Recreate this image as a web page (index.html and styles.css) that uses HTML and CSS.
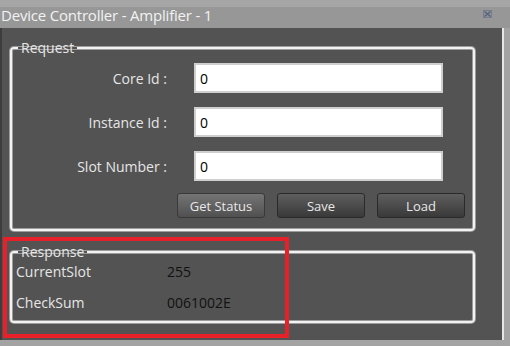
FILE: index.html
```html
<!DOCTYPE html>
<html lang="en">
<head>
  <meta charset="UTF-8"/>
  <title>Device Controller - Amplifier - 1</title>
  <link rel="stylesheet" href="styles.css">
</head>
<body>
  <div class="window">
    <div class="titlebar">
      <span class="title">Device Controller - Amplifier - 1</span>
      <svg class="pin" width="9" height="8" viewBox="0 0 9 8">
        <rect x="0.5" y="0.5" width="8" height="7" fill="#8a90a0" stroke="#767d8f" stroke-width="1"/>
        <path d="M1.5 1.5 L7.5 6.5 M7.5 1.5 L1.5 6.5" stroke="#5c6375" stroke-width="1.4"/>
      </svg>
    </div>

    <div class="panel">
      <fieldset class="group request">
        <legend>Request</legend>
        <div class="form">
          <label>Core Id :</label>
          <input type="text" value="0"/>
          <label>Instance Id :</label>
          <input type="text" value="0"/>
          <label>Slot Number :</label>
          <input type="text" value="0"/>
        </div>
        <div class="actions">
          <button class="btn active">Get Status</button>
          <button class="btn">Save</button>
          <button class="btn">Load</button>
        </div>
      </fieldset>

      <fieldset class="group response">
        <legend>Response</legend>
        <div class="result">
          <span class="key">CurrentSlot</span>
          <span class="val">255</span>
          <span class="key">CheckSum</span>
          <span class="val">0061002E</span>
        </div>
      </fieldset>
    </div>
  </div>

  <div class="highlight"></div>
</body>
</html>
```

FILE: styles.css
```css
* { box-sizing: border-box; margin: 0; padding: 0; }

body {
  width: 510px;
  height: 346px;
  background: #a3a3a3;
  font-family: 'Open Sans', 'Noto Sans', sans-serif;
  color: #e6e6e6;
  position: relative;
  overflow: hidden;
}

.titlebar {
  height: 28px;
  display: flex;
  justify-content: space-between;
  align-items: center;
  padding: 2px 18px 0 1px;
  background: linear-gradient(#a6a6a6 0, #a6a6a6 7px, #979797 7px);
}

.title {
  font-size: 15px;
  color: #f2f2f2;
  letter-spacing: -0.2px;
}

.pin { margin-top: -2px; }

.panel {
  width: 504px;
  height: 312px;
  background: #535353;
  border-left: 2px solid #3d3d3d;
  border-right: 2px solid #e6e6e6;
  padding: 11px 0 0 8px;
}

.group {
  width: 465px;
  border: 2px solid #f2f2f2;
  border-radius: 4px;
  box-shadow: 0 0 0 1px #9c9c9c, inset 0 0 0 1px #9c9c9c;
  padding: 0 8px 0 4px;
}

.group legend {
  font-size: 14px;
  line-height: 18px;
  color: #e6e6e6;
  padding: 0 3px;
  margin-left: 2px;
}

.form {
  display: grid;
  grid-template-columns: 151px 249px;
  column-gap: 27px;
  row-gap: 14px;
  align-items: center;
  padding-top: 6px;
}

.form label {
  text-align: right;
  font-size: 14px;
}

.form input {
  height: 30px;
  border: 2px solid #cfcfcf;
  background: #fff;
  font-family: inherit;
  font-size: 14px;
  color: #000;
  padding: 0 4px;
}

.actions {
  display: flex;
  justify-content: flex-end;
  gap: 12px;
  padding: 12px 0 11px 0;
}

.btn {
  width: 88px;
  height: 25px;
  border: 1px solid #2a2a2a;
  border-radius: 3px;
  background: linear-gradient(#5e5e5e, #393939);
  color: #e8e8e8;
  font-family: inherit;
  font-size: 13px;
}

.btn.active {
  background: linear-gradient(#747474, #505050);
  border-color: #393939;
}

.response {
  margin-top: 12px;
  height: 80px;
}

.result {
  display: grid;
  grid-template-columns: 151px 1fr;
  row-gap: 10px;
  font-size: 14px;
  line-height: 21px;
}

.result .val { color: #111; }

.highlight {
  position: absolute;
  left: 3px;
  top: 237px;
  width: 286px;
  height: 101px;
  border: 4px solid #e8202a;
}
```
